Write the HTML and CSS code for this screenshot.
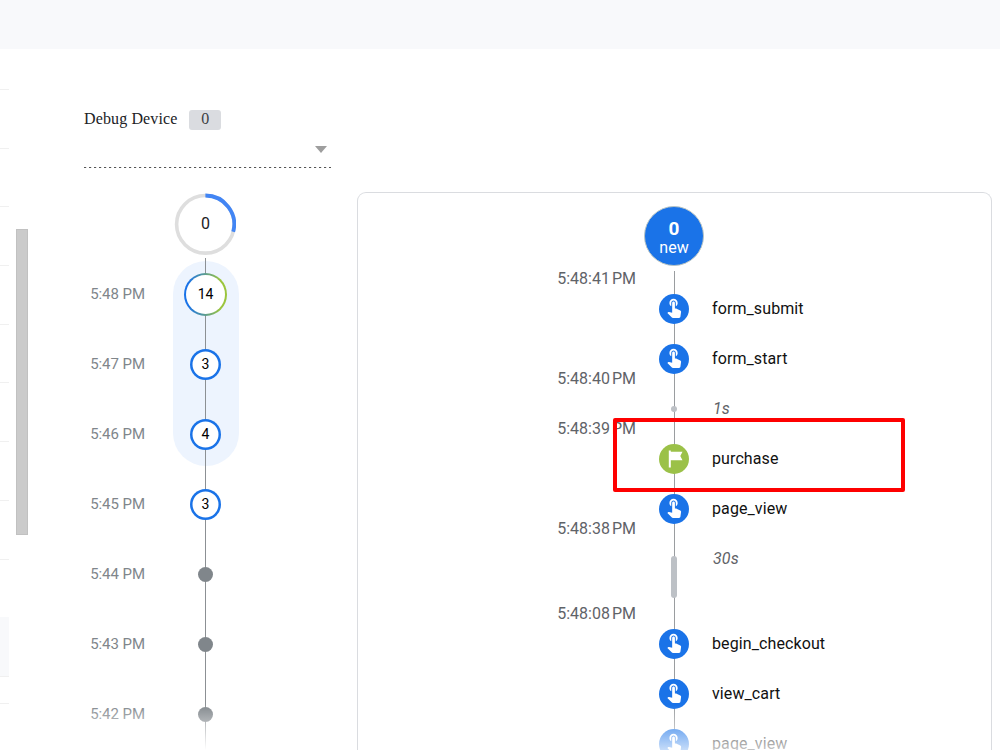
FILE: index.html
```
<!DOCTYPE html>
<html lang="en">
<head>
  <meta charset="UTF-8">
  <meta name="viewport" content="width=device-width, initial-scale=1.0">
  <title>DebugView</title>
  <link rel="stylesheet" href="styles.css">
</head>
<body>
  <svg class="sprite">
    <symbol id="touch" viewBox="0 0 24 24">
      <path d="M9 11.24V7.5C9 6.12 10.12 5 11.5 5S14 6.12 14 7.5v3.74c1.21-.81 2-2.18 2-3.74C16 5.01 13.99 3 11.5 3S7 5.01 7 7.5c0 1.56.79 2.93 2 3.74zm9.84 4.63l-4.54-2.26c-.17-.07-.35-.11-.54-.11H13v-6c0-.83-.67-1.5-1.5-1.5S10 6.67 10 7.5v10.74l-3.43-.72c-.08-.01-.15-.03-.24-.03-.31 0-.59.13-.79.33l-.79.8 4.94 4.94c.27.27.65.44 1.06.44h6.79c.75 0 1.33-.55 1.44-1.28l.75-5.27c.01-.07.02-.14.02-.2 0-.62-.38-1.16-.91-1.38z"/>
    </symbol>
    <symbol id="flag" viewBox="0 0 30 30">
      <path d="M9.8 6.5h2v1.2h11.7l-2.2 4.3 2.2 4.2H11.8v7.2h-2z"/>
    </symbol>
  </svg>

  <header class="topbar"></header>
  <main class="layout">
    <aside class="nav">
      <div class="nav-list">
        <div class="nav-head"></div>
        <div class="nav-row"></div>
        <div class="nav-row"></div>
        <div class="nav-row"></div>
        <div class="nav-row"></div>
        <div class="nav-row"></div>
        <div class="nav-row"></div>
        <div class="nav-row"></div>
        <div class="nav-row"></div>
        <div class="nav-row blank"></div>
        <div class="nav-row active"></div>
        <div class="nav-foot"></div>
      </div>
      <div class="scrollbar"></div>
    </aside>

    <section class="minutes">
      <div class="device">
        <span>Debug Device</span>
        <span class="count">0</span>
      </div>
      <div class="select"><span class="arrow"></span></div>

      <div class="current">
        <svg viewBox="0 0 62 62" width="62" height="62">
          <circle cx="31.4" cy="31.3" r="28.8" fill="#fff" stroke="#dedede" stroke-width="3.6"/>
          <path d="M31.4 2.5A28.8 28.8 0 0 1 59.2 38.8" fill="none" stroke="#4285f4" stroke-width="3.8"/>
        </svg>
        <span class="current-count">0</span>
      </div>

      <div class="minute-list">
        <div class="selection"></div>
        <div class="minute"><span>5:48 PM</span><b class="ring mixed">14</b></div>
        <div class="minute"><span>5:47 PM</span><b class="ring">3</b></div>
        <div class="minute"><span>5:46 PM</span><b class="ring">4</b></div>
        <div class="minute"><span>5:45 PM</span><b class="ring">3</b></div>
        <div class="minute"><span>5:44 PM</span><b class="dot"></b></div>
        <div class="minute"><span>5:43 PM</span><b class="dot"></b></div>
        <div class="minute"><span>5:42 PM</span><b class="dot"></b></div>
        <div class="fade"></div>
      </div>
    </section>

    <section class="stream">
      <div class="new-events"><strong>0</strong><span>new</span></div>
      <div class="event-list">
        <div class="event">
          <span class="time">5:48:41 PM</span>
          <span class="icon"><svg><use href="#touch"/></svg></span>
          <span class="name">form_submit</span>
        </div>
        <div class="event">
          <span class="time"></span>
          <span class="icon"><svg><use href="#touch"/></svg></span>
          <span class="name">form_start</span>
        </div>
        <div class="event">
          <span class="time">5:48:40 PM</span>
          <span class="gap-dot"></span>
          <span class="name gap">1s</span>
        </div>
        <div class="event">
          <span class="time">5:48:39 PM</span>
          <span class="icon goal"><svg><use href="#flag"/></svg></span>
          <span class="name">purchase</span>
          <div class="highlight"></div>
        </div>
        <div class="event">
          <span class="time"></span>
          <span class="icon"><svg><use href="#touch"/></svg></span>
          <span class="name">page_view</span>
        </div>
        <div class="event long">
          <span class="time">5:48:38 PM</span>
          <span class="gap-bar"></span>
          <span class="name gap">30s</span>
        </div>
        <div class="event">
          <span class="time">5:48:08 PM</span>
          <span class="icon"><svg><use href="#touch"/></svg></span>
          <span class="name">begin_checkout</span>
        </div>
        <div class="event">
          <span class="time"></span>
          <span class="icon"><svg><use href="#touch"/></svg></span>
          <span class="name">view_cart</span>
        </div>
        <div class="event">
          <span class="time"></span>
          <span class="icon"><svg><use href="#touch"/></svg></span>
          <span class="name">page_view</span>
        </div>
      </div>
      <div class="fade"></div>
    </section>
  </main>
</body>
</html>
```
FILE: styles.css
```
* {
  box-sizing: border-box;
}

body {
  margin: 0;
  height: 750px;
  overflow: hidden;
  background: #fff;
  font-family: Roboto, "Liberation Sans", sans-serif;
  color: #202124;
}

.sprite {
  display: none;
}

.topbar {
  height: 49px;
  background: #f8f9fb;
}

.layout {
  display: flex;
  height: 701px;
  overflow: hidden;
}

/* left edge */
.nav {
  display: flex;
  gap: 7px;
  width: 84px;
}

.nav-list {
  width: 9px;
}

.nav-head {
  height: 41px;
  border-bottom: 1px solid #f0f0f0;
}

.nav-row {
  height: 58.7px;
  border-bottom: 1px solid #f0f0f0;
}

.nav-row.blank {
  border-color: #f8f9fb;
}

.nav-row.active {
  background: #f8f9fb;
}

.nav-foot {
  height: 27px;
  border-bottom: 1px solid #f0f0f0;
}

.scrollbar {
  width: 12px;
  height: 306px;
  margin-top: 180px;
  background: #cbcbcb;
  border: 1px solid #c1c1c1;
}

/* minutes column */
.minutes {
  width: 247px;
}

.device {
  display: flex;
  align-items: center;
  gap: 12px;
  margin-top: 60px;
  height: 21px;
  font: 16px/18px "Liberation Serif", serif;
  letter-spacing: 0.12px;
}

.device span:first-child {
  height: 20px;
}

.count {
  width: 32px;
  height: 20px;
  border-radius: 3px;
  background: #dadce0;
  color: #3c4043;
  text-align: center;
}

.select {
  display: flex;
  justify-content: flex-end;
  height: 38px;
  padding: 16px 4px 0 0;
  background: repeating-linear-gradient(90deg, #555 0 2px, #ddd 2px 3px, transparent 3px 5px) left bottom / 100% 1px no-repeat;
}

.arrow {
  width: 0;
  height: 0;
  border: 6px solid transparent;
  border-top: 7px solid #9e9e9e;
  border-bottom: 0;
}

.current {
  display: grid;
  width: 62px;
  height: 62px;
  margin: 25px 0 0 90px;
}

.current svg,
.current-count {
  grid-area: 1 / 1;
}

.current-count {
  place-self: center;
  padding: 0 0 2px 1px;
  font-size: 16px;
}

.minute-list {
  position: relative;
  height: 492px;
  margin-top: 3px;
  padding-top: 1px;
  background: linear-gradient(#8c9094, #8c9094) 121px 0 / 1px 100% no-repeat;
}

.selection {
  position: absolute;
  z-index: -1;
  top: 3px;
  left: 88.5px;
  width: 66px;
  height: 205px;
  border-radius: 33px;
  background: #edf4fe;
}

.minute {
  display: grid;
  grid-template-columns: 61px 121px;
  align-items: center;
  justify-items: center;
  height: 70px;
  font-size: 15px;
  color: #80868b;
}

.minute span {
  justify-self: end;
  letter-spacing: -0.05px;
  white-space: nowrap;
}

.ring {
  display: grid;
  place-items: center;
  width: 31px;
  height: 31px;
  border-radius: 50%;
  background: #fff;
  box-shadow: inset 0 0 0 2.5px #1a73e8;
  color: #000;
  font-size: 14px;
  font-weight: 400;
}

.ring.mixed {
  width: 43px;
  height: 43px;
  border: 2px solid transparent;
  box-shadow: none;
  background: linear-gradient(#fff, #fff) padding-box, linear-gradient(90deg, #1a73e8 10%, #9bc53d 85%) border-box;
}

.dot {
  width: 15px;
  height: 15px;
  border-radius: 50%;
  background: #80868b;
}

.fade {
  position: absolute;
  right: 0;
  bottom: 0;
  left: 0;
  height: 46px;
  background: linear-gradient(rgba(255, 255, 255, 0), #fff);
}

/* seconds stream */
.stream {
  position: relative;
  width: 635px;
  height: 558px;
  margin: 143px 0 0 26px;
  border: 1px solid #dadce0;
  border-bottom: 0;
  border-radius: 9px 9px 0 0;
  overflow: hidden;
}

.new-events {
  display: flex;
  flex-direction: column;
  align-items: center;
  justify-content: center;
  width: 60px;
  height: 60px;
  margin: 13px 0 0 286px;
  padding-top: 4px;
  border: 1px solid #b8c4c4;
  border-radius: 50%;
  background: #1a73e8;
  color: #fff;
  font-size: 16px;
  line-height: 19px;
}

.new-events strong {
  font-size: 19px;
  line-height: 19px;
}

.event-list {
  margin-top: 5px;
  padding-top: 13px;
  background: linear-gradient(#9a9da0, #9a9da0) 316px 0 / 1px 100% no-repeat;
}

.event {
  position: relative;
  display: grid;
  grid-template-columns: 278px 76px 1fr;
  align-items: center;
  justify-items: center;
  height: 50px;
  font-size: 16px;
}

.event.long {
  height: 85px;
}

.time {
  align-self: start;
  justify-self: end;
  margin-top: -15px;
  line-height: 20px;
  color: #5f6368;
  word-spacing: -2px;
  white-space: nowrap;
}

.name {
  align-self: start;
  justify-self: start;
  margin-top: 15px;
  line-height: 20px;
  letter-spacing: 0.1px;
  color: #111;
}

.name.gap {
  padding-left: 1px;
  font-style: italic;
  color: #5f6368;
}

.icon {
  display: grid;
  justify-items: center;
  width: 30px;
  height: 30px;
  padding-top: 2px;
  border-radius: 50%;
  background: #1a73e8;
}

.icon svg {
  width: 22px;
  height: 22px;
  fill: #fff;
}

.icon.goal {
  padding-top: 0;
  background: #9bc148;
}

.icon.goal svg {
  width: 30px;
  height: 30px;
}

.gap-dot {
  width: 6px;
  height: 6px;
  border-radius: 50%;
  background: #bdc1c6;
}

.gap-bar {
  width: 6px;
  height: 42px;
  border-radius: 3px;
  background: #bdc1c6;
}

.highlight {
  position: absolute;
  top: -16px;
  left: 255px;
  width: 292px;
  height: 74px;
  border: 4px solid #fe0000;
  border-radius: 2px;
}

.stream .fade {
  bottom: -15px;
  height: 60px;
}
```
